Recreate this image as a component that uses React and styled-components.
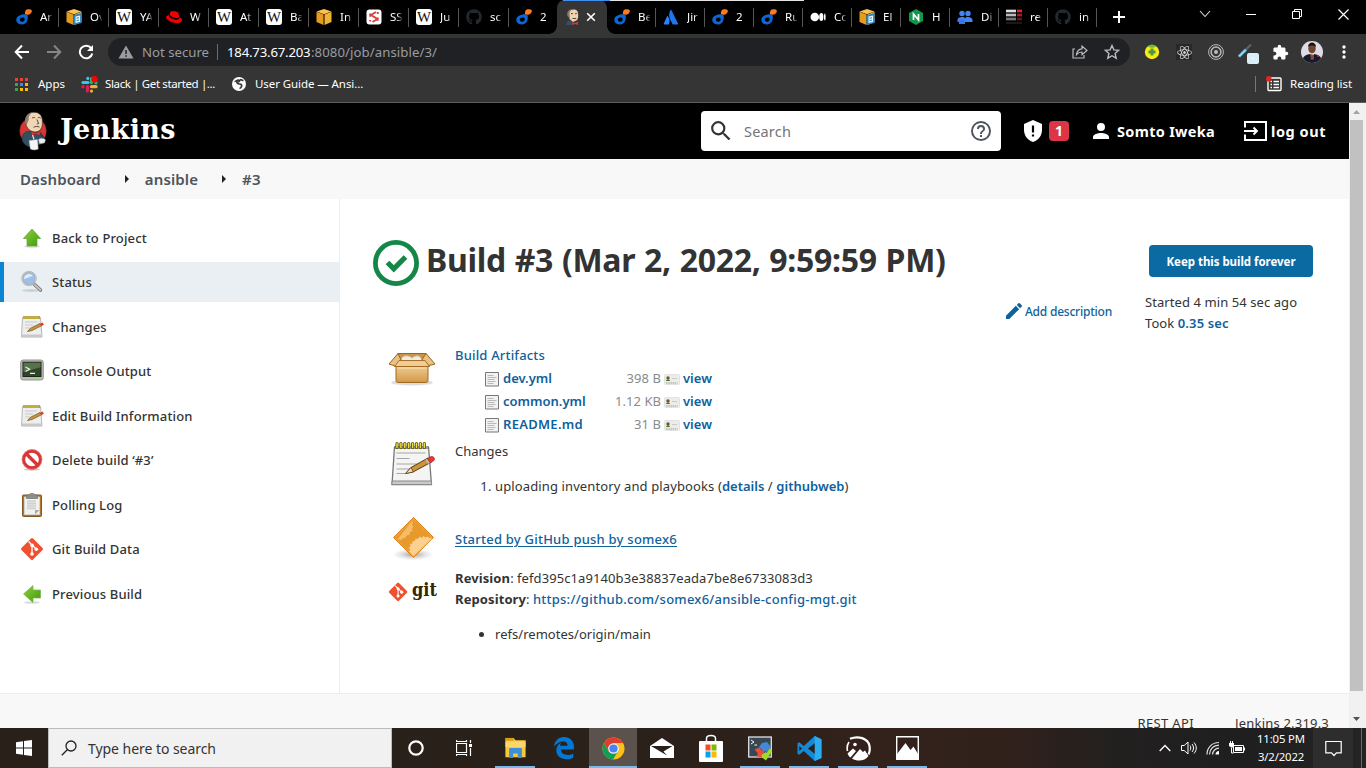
import React from "react";
import styled, { createGlobalStyle, css } from "styled-components";
import { FaGithub, FaRedhat, FaReact } from "react-icons/fa";
import { MdExtension } from "react-icons/md";

const GlobalStyle = createGlobalStyle`
  *, *::before, *::after { box-sizing: border-box; }
  html, body { margin: 0; padding: 0; height: 100%; overflow: hidden; }
  body { font-family: "Noto Sans", "Open Sans", sans-serif; font-size: 13px; color: #333; background: #fff; }
  svg { display: block; flex: none; }
  a { text-decoration: none; }
`;

const Screen = styled.div`
  display: flex;
  flex-direction: column;
  width: 1366px;
  height: 768px;
  overflow: hidden;
`;

/* ---------- browser chrome ---------- */

const TabStrip = styled.div`
  position: relative;
  display: flex;
  height: 34px;
  padding-left: 9px;
  background: #000;
`;

const LoadingBar = styled.div`
  position: absolute;
  z-index: 2;
  top: 0;
  left: 563px;
  width: 241px;
  height: 1px;
  background: linear-gradient(90deg, #3f8ef0 47px, #e4e4e4 47px);
`;

const Tab = styled.div`
  display: flex;
  align-items: center;
  flex: none;
  width: ${(p) => p.$width}px;
  height: 34px;
  padding-left: 7px;
  gap: 8px;
  ${(p) =>
    p.$active
      ? css`
          position: relative;
          padding-left: 8px;
          gap: 5px;
          background: #353535;
          border-radius: 8px 8px 0 0;
          &::before,
          &::after {
            content: "";
            position: absolute;
            bottom: 0;
            width: 8px;
            height: 8px;
          }
          &::before {
            left: -8px;
            background: radial-gradient(circle at 0 0, #000 7.5px, #353535 8px);
          }
          &::after {
            right: -8px;
            background: radial-gradient(circle at 100% 0, #000 7.5px, #353535 8px);
          }
        `
      : css`
          background: ${p.$last ? "none" : "linear-gradient(#555, #555) right 0 top 8px / 1px 19px no-repeat"};
        `}
`;

const TabTitle = styled.span`
  width: 12px;
  overflow: hidden;
  color: #fff;
  font-size: 11.5px;
  line-height: 18px;
  white-space: nowrap;
  -webkit-mask-image: linear-gradient(90deg, #000 7px, transparent 13px);
  mask-image: linear-gradient(90deg, #000 7px, transparent 13px);
`;

const NewTab = styled.div`
  display: flex;
  align-items: center;
  margin-left: 16px;
`;

const WindowButtons = styled.div`
  display: flex;
  align-items: center;
  height: 28px;
  margin-left: auto;
`;

const WindowButton = styled.div`
  display: flex;
  justify-content: center;
  width: 46px;
`;

const Toolbar = styled.div`
  display: flex;
  align-items: center;
  height: 36px;
  padding-left: 12px;
  background: #353535;
`;

const NavButton = styled.div`
  display: flex;
  justify-content: center;
  width: 20px;
  margin-right: 12px;
`;

const Omnibox = styled.div`
  display: flex;
  align-items: center;
  width: 1022px;
  height: 28px;
  padding: 0 10px;
  border-radius: 14px;
  background: #202124;
  color: #9a9ca0;
  font-size: 13.2px;
  white-space: nowrap;
`;

const SecurityText = styled.span`
  width: 75px;
  margin-left: 8px;
  line-height: 18px;
`;

const OmniDivider = styled.i`
  width: 1px;
  height: 16px;
  margin-right: 9px;
  background: #6a6c70;
`;

const UrlHost = styled.span`
  width: 84px;
  color: #fff;
  letter-spacing: -0.2px;
  line-height: 18px;
`;

const UrlPath = styled.span`
  flex: 1;
  letter-spacing: 0.07px;
  line-height: 18px;
`;

const OmniActions = styled.div`
  display: flex;
  align-items: center;
  gap: 16px;
`;

const Extensions = styled.div`
  display: flex;
  align-items: center;
  margin-left: 6px;
`;

const ExtensionSlot = styled.div`
  display: flex;
  justify-content: center;
  width: 32px;
`;

const ReactTile = styled.div`
  display: grid;
  place-items: center;
  width: 16px;
  height: 16px;
  background: #282828;
`;

const BookmarkBar = styled.div`
  display: flex;
  align-items: center;
  height: 32px;
  padding: 0 14px 4px 15px;
  background: #353535;
  color: #fff;
  font-size: 11.5px;
`;

const ChromeEdge = styled.div`
  height: 1px;
  background: #5c5c5c;
`;

const Bookmark = styled.div`
  display: flex;
  align-items: center;
  gap: ${(p) => p.$gap}px;
  margin-right: ${(p) => p.$after || 16}px;
  letter-spacing: ${(p) => p.$tracking || 0}px;
  line-height: 18px;
  white-space: nowrap;
`;

const ReadingList = styled(Bookmark)`
  margin: 0 0 0 auto;
  padding-left: 11px;
  background: linear-gradient(#777, #777) left center / 1px 16px no-repeat;
`;

/* ---------- page ---------- */

const Viewport = styled.div`
  display: flex;
  height: 625px;
`;

const Page = styled.div`
  width: 1349px;
  overflow: hidden;
  background: #fff;
`;

const Header = styled.header`
  display: flex;
  align-items: center;
  height: 56px;
  padding: 0 23px 0 19px;
  background: #000;
  color: #fff;
  font-size: 14.5px;
  font-weight: 700;
  white-space: nowrap;
`;

const BrandName = styled.span`
  margin: -3px 0 0 13px;
  font: 700 27px/36px "DejaVu Serif", serif;
  letter-spacing: 0.35px;
`;

const SearchBox = styled.div`
  display: flex;
  align-items: center;
  width: 300px;
  height: 40px;
  margin-left: auto;
  padding: 0 9px;
  border-radius: 4px;
  background: #fff;
`;

const SearchPlaceholder = styled.span`
  flex: 1;
  margin-left: 12px;
  color: #757575;
  font-weight: 400;
  letter-spacing: 0.18px;
`;

const SecurityAlert = styled.div`
  display: flex;
  align-items: center;
  gap: 5px;
  margin-left: 21px;
`;

const AlertCount = styled.span`
  width: 20px;
  height: 20px;
  border-radius: 4px;
  background: #dc3545;
  font-size: 14px;
  line-height: 20px;
  text-align: center;
`;

const HeaderLink = styled.a`
  display: flex;
  align-items: center;
  gap: ${(p) => p.$gap}px;
  margin-left: ${(p) => p.$before}px;
  letter-spacing: ${(p) => p.$tracking}px;
`;

const Breadcrumbs = styled.nav`
  display: flex;
  align-items: center;
  height: 40px;
  padding-left: 20px;
  background: #f8f8f8;
  color: #4d545d;
  font-size: 15px;
  font-weight: 600;
  letter-spacing: 0.12px;
`;

const CrumbArrow = styled.i`
  width: 0;
  margin: 0 ${(p) => p.$after}px 0 24px;
  border: 4px solid transparent;
  border-left-color: #222;
  border-right-width: 0;
`;

const Body = styled.div`
  display: flex;
  height: 494px;
`;

const SidePanel = styled.aside`
  display: flex;
  flex-direction: column;
  gap: 4.5px;
  width: 340px;
  padding-top: 18.8px;
  border-right: 1px solid #e9eef1;
`;

const Task = styled.a`
  display: flex;
  align-items: center;
  gap: 8px;
  height: 40px;
  padding-left: 20px;
  font-weight: 500;
  letter-spacing: 0.14px;
  ${(p) =>
    p.$active &&
    css`
      background: #e9eff2;
      box-shadow: inset 4px 0 #0b86d4;
    `}
`;

const Main = styled.main`
  display: flex;
  flex: 1;
  padding: 41px 0 0 32px;
`;

const BuildColumn = styled.div`
  width: 740px;
`;

const TitleRow = styled.div`
  display: flex;
  align-items: center;
  height: 46px;
  gap: 6px;
`;

const Title = styled.h1`
  margin: -7px 0 0;
  font-size: 32px;
  font-weight: 700;
  letter-spacing: -0.3px;
  word-spacing: 0.8px;
  line-height: 40px;
  white-space: nowrap;
`;

const DescriptionRow = styled.div`
  display: flex;
  justify-content: flex-end;
  height: 58px;
  padding-top: 15px;
`;

const DescriptionLink = styled.a`
  display: flex;
  align-items: center;
  gap: 3px;
  height: 20px;
  color: #0e639c;
  font-size: 12px;
  font-weight: 500;
  letter-spacing: -0.22px;
`;

const SummaryRow = styled.section`
  display: grid;
  grid-template-columns: 67px 1fr;
  height: ${(p) => p.$height}px;
  padding-left: 16px;
`;

const SummaryText = styled.div`
  padding-top: ${(p) => p.$top || 1}px;
  line-height: 21px;
  white-space: nowrap;
`;

const Link = styled.a`
  color: #0f619b;
  font-weight: ${(p) => p.$weight || 600};
  letter-spacing: ${(p) => p.$tracking || 0}px;
  text-decoration: ${(p) => (p.$underlined ? "underline" : "none")};
  text-underline-offset: 2px;
`;

const FileTable = styled.div`
  display: grid;
  grid-template-columns: 18px 76px 85px 19px auto;
  grid-auto-rows: 23px;
  align-items: center;
  padding: 1px 0 0 30px;
`;

const FileSize = styled.span`
  padding-right: 3px;
  color: #8a8a8a;
  letter-spacing: 0.06px;
  text-align: right;
`;

const ChangeList = styled.ol`
  margin: 14px 0 0;
  padding-left: 40px;
  letter-spacing: 0.12px;
`;

const RefList = styled.ul`
  margin: 14px 0 0;
  padding-left: 40px;
  letter-spacing: 0.03px;
`;

const FieldName = styled.b`
  letter-spacing: 0.1px;
`;

const Hash = styled.span`
  letter-spacing: 0.09px;
`;

const BuildInfo = styled.div`
  padding: 5px 0 0 33px;
  line-height: 21px;
  white-space: nowrap;
  letter-spacing: 0.08px;
`;

const KeepButton = styled.button`
  display: block;
  width: 164px;
  height: 32px;
  margin: 0 0 15px 4px;
  padding: 0;
  border: 0;
  border-radius: 4px;
  background: #0b6aa2;
  color: #fff;
  font: 700 11.5px/34px "Noto Sans", sans-serif;
  letter-spacing: -0.04px;
`;

const Footer = styled.footer`
  display: flex;
  justify-content: flex-end;
  height: 36px;
  padding: 19px 20px 0 0;
  border-top: 1px solid #e9eef1;
  background: #f8f8f8;
  line-height: 20px;
  letter-spacing: 0.2px;
`;

const FooterLink = styled.a`
  margin-left: 41px;
  letter-spacing: ${(p) => p.$tracking}px;
`;

const ScrollTrack = styled.div`
  display: flex;
  flex-direction: column;
  align-items: center;
  width: 17px;
  padding: 7px 2px 0 0;
  background: #f1f1f1;
`;

const ScrollThumb = styled.div`
  width: 13px;
  height: 571px;
  margin: 6px 0 26px;
  background: #c1c1c1;
`;

/* ---------- taskbar ---------- */

const Taskbar = styled.div`
  display: flex;
  height: 40px;
  background: linear-gradient(90deg, #29201a 0, #2b211a 700px, #33221b 900px, #30211c 1020px, #22201f 1110px, #1f1f20 1250px, #242424 1366px);
`;

const StartButton = styled.div`
  display: grid;
  place-items: center;
  width: 48px;
`;

const TaskSearch = styled.div`
  display: flex;
  align-items: center;
  gap: 11px;
  width: 344px;
  padding-left: 12px;
  border: 1px solid #bcbcbc;
  background: #f1f1f1;
  color: #333;
  font-size: 14px;
  letter-spacing: -0.05px;
`;

const AppSlot = styled.div`
  display: flex;
  align-items: center;
  justify-content: center;
  width: 49px;
  padding-left: ${(p) => (p.$running ? 1 : 0)}px;
  background: ${(p) =>
    p.$running ? `linear-gradient(#76b9ed, #76b9ed) center bottom / ${p.$focused ? 48 : 40}px 2px no-repeat` : "none"}
    ${(p) => (p.$focused ? ", linear-gradient(#5b524d, #5b524d) center / 48px 40px no-repeat" : "")};
`;

const Tray = styled.div`
  display: flex;
  align-items: center;
  margin-left: auto;
`;

const TrayIcon = styled.div`
  display: flex;
  justify-content: center;
  width: 24px;
`;

const Clock = styled.div`
  width: 64px;
  color: #fff;
  font-size: 11.3px;
  letter-spacing: -0.12px;
  line-height: 18px;
  text-align: center;
`;

const ActionCenter = styled.div`
  display: grid;
  place-items: center;
  width: 40px;
  height: 40px;
  background: #2d2d2d;
`;

const DesktopEdge = styled.div`
  width: 5px;
  height: 40px;
  margin-left: 8px;
  border-left: 1px solid #6a6a6a;
`;

/* ---------- icons ---------- */

const Svg = ({ size = 16, w, h, box = 16, children }) => (
  <svg width={w || size} height={h || size} viewBox={typeof box === "string" ? box : `0 0 ${box} ${box}`} fill="none">
    {children}
  </svg>
);

const Digital = () => (
  <Svg>
    <path fillRule="evenodd" d="M6.500 5.500c1.800-.4 3.600 0 5 .6.900 3.800-.2 9.400-5.700 9.400C2.500 15.500.300 13.500.300 10.800c0-3 2.900-4.600 6.200-5.300zM6.800 8.500c-1.800 0-3 .9-3 2.200s1 2 2.400 2c1.600 0 2.500-1.200 2.500-2.500 0-1.100-.7-1.700-1.900-1.700z" fill="#0c66d8" />
    <path d="M8.900 5.300C8.600 1.800 10 .300 12 .300h1.500c1.800 0 2.500 1 2.300 2.200-.3 2-2 3.200-4 3.200-1.300 0-2.100-.2-2.900-.4z" fill="#ff7a1f" />
  </Svg>
);
const AwsCube = ({ doc }) => (
  <Svg>
    <path d="M8 0l7.500 2.500L8 5.200.500 2.500z" fill="#f9c253" />
    <path d="M.500 2.800l7 2.700V16l-7-3z" fill="#e59c1c" />
    <path d="M15.500 2.800l-7 2.700V16l7-3z" fill="#f2b233" />
    {doc && (
      <>
        <path d="M7.500 6.200L15.700 4v9.900L7.500 16z" fill="#2a86c4" />
        <path d="M9.500 7.600l4.600-1.200v6.400l-4.600 1.200z" fill="#e9f4fb" />
        <path d="M10.500 9.300l2.500-.6M10.500 11.700l2.500-.6" stroke="#2a86c4" />
      </>
    )}
  </Svg>
);
const Wiki = () => (
  <Svg>
    <rect width="16" height="16" rx="3" fill="#fff" />
    <text x="8" y="13" textAnchor="middle" fontFamily="Liberation Serif, serif" fontSize="14" fill="#111" textLength="14" lengthAdjust="spacingAndGlyphs">W</text>
  </Svg>
);
const RedHat = () => <FaRedhat size={16} color="#e00" />;
const SshIcon = () => (
  <Svg>
    <rect x=".5" y=".5" width="15" height="15" rx="3" fill="#fff" />
    <path d="M10 3L5 6l6.500 4-5 3M4.200 4.500v3.200M11.800 8.500v3.200M4.200 11v1.500M11.800 3v2" stroke="#d9403c" strokeWidth="1.900" />
  </Svg>
);
const GitHub = () => <FaGithub size={16} color="#24292e" />;
const Atlassian = () => (
  <Svg>
    <path d="M4.700 7.300c-.2-.3-.5-.3-.7 0L.700 14.800c-.1.300 0 .600.400.600h4.700c1.500-2.800.8-6-1.100-8.100z" fill="#2684ff" />
    <path d="M7.600 1c-2.300 3.700-1.500 7.400.1 10.600l1.700 3.500c.1.200.3.300.5.300h4.800c.3 0 .5-.3.400-.6L8.400 1.100C8.200.800 7.800.700 7.600 1z" fill="#1f74f0" />
  </Svg>
);
const Medium = () => (
  <Svg>
    <circle cx="4.800" cy="8" r="4.300" fill="#fff" />
    <ellipse cx="11.300" cy="8" rx="2.100" ry="4" fill="#fff" />
    <ellipse cx="14.800" cy="8" rx=".8" ry="3.500" fill="#fff" />
  </Svg>
);
const Nginx = () => (
  <Svg>
    <path d="M8 0l7 4v8l-7 4-7-4V4z" fill="#12984a" />
    <path d="M5.500 11V5l5 6V5" stroke="#fff" strokeWidth="1.700" />
  </Svg>
);
const People = () => (
  <Svg>
    <g fill="#4285f4">
      <circle cx="5" cy="4.500" r="2.700" /><circle cx="11" cy="4.500" r="2.700" />
      <path d="M.5 13V11c0-2 2.200-3 4.500-3s3 .5 3 2c0-1.500 1-2 3-2s4.500 1 4.500 3v2z" />
    </g>
    <path d="M2 15V12.500c0-1.500 1.500-2.200 3-2.200s3 .7 3 2.200V15z" fill="#3577e5" />
  </Svg>
);
const RedmineBars = () => (
  <Svg>
    <path d="M0 2h10" stroke="#ddd" strokeWidth="2.700" /><path d="M0 6h10" stroke="#bbb" strokeWidth="2.700" />
    <path d="M0 10h10" stroke="#777" strokeWidth="2.700" />
    <path d="M11 2h5" stroke="#e8232c" strokeWidth="2.700" /><path d="M11 6h5" stroke="#a52026" strokeWidth="2.700" /><path d="M11 10h5" stroke="#6b1418" strokeWidth="2.700" />
    <path d="M0 14h16" stroke="#191919" strokeWidth="2" />
  </Svg>
);
const ButlerFace = () => (
  <Svg>
    <path d="M3.500 3.500C5 0 11-.500 12.500 2.500c1 3 1 6-.3 8.500l-4.200 2-3.500-3z" fill="#efd2b0" />
    <path d="M2.500 7C1.200 3 4 0 7.500 0 5.200 1 4.500 3 4.600 5.500L5 10z" fill="#8a7a6a" />
    <path d="M6 4.500l2 .300M10 4.800l1.800-.300M7.500 9.500h3.700" stroke="#59463c" />
    <path d="M1 16c.5-3 2-4.500 4-5l4 5z" fill="#335061" />
    <path d="M7 13l3 1 3-1.500V16l-3-1-2.500 1z" fill="#d33833" />
  </Svg>
);

const JenkinsLogo = () => (
  <Svg w={28} h={40} box="0 0 28 40">
    <ellipse cx="14" cy="20" rx="13.300" ry="13.500" fill="#d33833" stroke="#8b1f1c" strokeWidth=".5" />
    <path d="M3 28c0-4 2-7 6-7.500l9 0c4 .500 6 3.500 6.500 8l-1 4-11 3.500C8 36 5 33 4 31z" fill="#335061" stroke="#1c2c36" strokeWidth=".5" />
    <path d="M6.500 11C6 5 9.500 1.300 15 1.200c5 0 8 3 8.300 7.800.3 4.500 0 8.500-3.300 11-3 1.500-7 1.300-9.500-1C8 17 6.800 14 6.500 11z" fill="#f0d6b7" stroke="#2b2522" strokeWidth=".6" />
    <path d="M7.500 15C4.500 9.500 6 3 13.500 1.300 10.300 3.500 9.500 6 9.700 9c-1 1.500-1.200 3-2.200 6z" fill="#8d8073" />
    <path d="M13 7.200c1-1 2.200-1 3.200-.2M18.800 7c1-.8 2-.7 3 .1M18 8.500l1.600 4-1.800.600M14.500 16.300c1.500-1 4.500-1 6-.300" stroke="#40342d" strokeWidth=".9" />
    <path d="M12 20l4.500 2 4.500-2 .8 4.500-5-1.300-4.300 1.500z" fill="#d33833" stroke="#6d1818" strokeWidth=".4" />
    <path d="M13.500 24l1.500 4.500" stroke="#dfe7ec" strokeWidth="1.200" />
    <path d="M10 29.500l8.500-1 .8 9.500c-2.500 1.200-5.500 1.300-8 0z" fill="#f5f5f5" stroke="#999" strokeWidth=".4" />
    <path d="M19.500 28.500c2.500-2 5.500-1.800 7 .5l-1 3-5 .8z" fill="#e8edf0" stroke="#8a949a" strokeWidth=".4" />
    <path d="M21.500 22.500l3 4.500" stroke="#29404d" strokeWidth="2" />
  </Svg>
);

const ArrowUp = ({ left }) => (
  <Svg size={24} box={24}>
    <defs><linearGradient id={left ? "gl" : "gu"} x1="0" y1="0" x2="1" y2="1"><stop offset="0" stopColor="#8fd03f" /><stop offset="1" stopColor="#3f9c08" /></linearGradient></defs>
    <ellipse cx="12" cy="20.500" rx="8" ry="1.300" fill="#ddd" />
    {left ? (
      <path d="M3.500 12L13 3.500V8h7.500v8H13v4.500z" fill="url(#gl)" stroke="#79b24d" strokeWidth=".7" />
    ) : (
      <path d="M12 3l8.700 9.500H17v7.500H7v-7.500H3.300z" fill="url(#gu)" stroke="#65a53b" strokeWidth=".7" />
    )}
  </Svg>
);
const Magnifier = () => (
  <Svg size={24} box={24}>
    <ellipse cx="11" cy="20.500" rx="9" ry="1.500" fill="#ccd2d4" />
    <path d="M14.500 14.500l6 5.500" stroke="#777" strokeWidth="3.600" strokeLinecap="round" />
    <path d="M14.500 14.500l6 5.500" stroke="#c4c4c4" strokeWidth="1.800" strokeLinecap="round" />
    <circle cx="9" cy="8.500" r="6.700" fill="#9cbfec" stroke="#9ea2a5" strokeWidth="1.800" />
    <path d="M4 9a5 5 0 0 1 9-3c-3 .500-5 2-9 3z" fill="#deecfb" />
    <circle cx="9" cy="8.500" r="6.700" stroke="#e7e7e7" strokeWidth=".6" />
  </Svg>
);
const Notepad = ({ size = 24, large }) => (
  <Svg size={size} box={large ? "-2 -1.500 48 48" : 24}>
    {large ? (
      <>
        <path d="M4.500 5.500h34l3 37.500H2z" fill="#f4f4f3" stroke="#777" strokeWidth="1.300" />
        <path d="M2 39.500h39.500v3.500H2z" fill="#c9c9c9" stroke="#8a8a8a" />
        <path d="M5 5h33v2.500H5z" fill="#999" />
        <path d="M7 2v4M10.900 2v4M14.800 2v4M18.700 2v4M22.600 2v4M26.500 2v4M30.400 2v4M34.300 2v4" stroke="#5d5200" strokeWidth="3.200" strokeLinecap="round" />
        <path d="M7 2v4M10.900 2v4M14.800 2v4M18.700 2v4M22.600 2v4M26.500 2v4M30.400 2v4M34.300 2v4" stroke="#efe03f" strokeWidth="1.500" strokeLinecap="round" />
        <path d="M6.500 11.500h29M6.500 17h13M6.500 22.500h26M6.500 27.500h17M6.500 32h9" stroke="#a5a5a5" strokeWidth="1.200" />
        <path d="M15.500 32l5.500-6L38 16.500l3.500 4L23 30.500z" fill="#c8943d" stroke="#5e3c0e" />
        <path d="M15.500 32l5.500-6 2.300 4.500z" fill="#f2dcb0" stroke="#4a3a22" strokeWidth=".7" />
        <path d="M37.500 17l3.500-2c2.500-.500 4.500 2 3 4l-3.500 2.200z" fill="#e33" stroke="#8e2222" strokeWidth=".6" />
        <path d="M36 18l3 4" stroke="#bbb" strokeWidth="1.700" />
      </>
    ) : (
      <>
        <path d="M2.500 2.500h18L22 22H1.500z" fill="#eeeeed" stroke="#b6b6b6" />
        <path d="M1.500 19.500h20V22h-20z" fill="#c9c9c9" />
        <path d="M3 1h17v3H3z" fill="#b5a037" /><path d="M4 1v3M6 1v3M8 1v3M10 1v3M12 1v3M14 1v3M16 1v3M18 1v3" stroke="#d6c65c" strokeWidth=".7" />
        <path d="M5 7h12M5 10h8M5 13h5" stroke="#c9c9c9" />
        <path d="M7.500 16.500l3-3.300L20 8.500l2 2-10 5z" fill="#c8943d" stroke="#71501f" strokeWidth=".7" />
        <path d="M19.500 9l3-1.500 1.500 2-2.500 1.500z" fill="#e33c2f" />
      </>
    )}
  </Svg>
);
const Terminal = () => (
  <Svg size={24} box={24}>
    <rect x=".7" y="1" width="22.600" height="20" rx="2.500" fill="#b9bbb6" stroke="#94968f" />
    <rect x="3" y="3.200" width="18" height="14.300" fill="#2f4428" stroke="#1b2518" />
    <path d="M3.500 3.700h17v4.500L3.500 13z" fill="#58734c" />
    <path d="M5.500 8l4 2.300-4 2.200M10 14.300h5" stroke="#e9f3e4" strokeWidth="1.300" />
    <path d="M16 19.500h2" stroke="#7f4" />
  </Svg>
);
const NoEntry = () => (
  <Svg size={24} box={24}>
    <ellipse cx="12" cy="21.500" rx="8" ry="1.200" fill="#ccc" />
    <circle cx="12" cy="11.500" r="8.500" fill="#fff" stroke="#d93535" strokeWidth="3.300" />
    <path d="M6 5.500l12 12" stroke="#d93535" strokeWidth="3.300" />
    <circle cx="12" cy="11.500" r="10" stroke="#ef8d8d" strokeWidth=".7" />
  </Svg>
);
const Clipboard = () => (
  <Svg size={24} box={24}>
    <rect x="2.500" y="2" width="19" height="21.500" rx="1" fill="#b2762c" stroke="#85561d" />
    <path d="M4.500 4h15v17.500h-15z" fill="#f1f1f0" stroke="#d5d5d5" />
    <path d="M7 7.500h9v9H7z" fill="#dedede" /><path d="M7 8h9M7 10.500h9M7 13h9M7 15.500h9" stroke="#d0d0d0" />
    <path d="M6.500 2H9c.500-2 5.500-2 6 0h2.500v3.500h-11z" fill="#8a8f88" stroke="#646862" strokeWidth=".6" />
    <path d="M19.500 17l-4.500 4.500V17z" fill="#aaa" />
  </Svg>
);
const GitShape = () => (
  <>
    <rect x="3.800" y="3.800" width="16.400" height="16.400" rx="1.500" transform="rotate(45 12 12)" fill="#f05030" />
    <path d="M8.500 4.500l3.500 3.500v9M12 8l4.500 4.300" stroke="#fff" strokeWidth="1.300" />
    <circle cx="12" cy="8.300" r="1.800" fill="#fff" /><circle cx="12" cy="17" r="1.800" fill="#fff" /><circle cx="16.300" cy="12.300" r="1.800" fill="#fff" />
  </>
);
const GitMark = () => <Svg size={24} box={24}><GitShape /></Svg>;
const GitLogo = () => (
  <Svg size={50} box={50}>
    <g transform="translate(0 14.800) scale(.84)"><GitShape /></g>
    <text x="24" y="29" fontFamily="DejaVu Serif, serif" fontWeight="700" fontSize="18" fill="#362701" textLength="25" lengthAdjust="spacingAndGlyphs">git</text>
  </Svg>
);
const Success = () => (
  <Svg w={48} h={48} box={48}>
    <circle cx="24" cy="24" r="20.600" stroke="#138648" strokeWidth="4.800" />
    <path d="M15.500 23.500l6.300 6.300L33.500 18" stroke="#138648" strokeWidth="5.200" />
  </Svg>
);
const Pencil = () => (
  <Svg size={16} box="3 3 18 18">
    <path fill="#0f619b" d="M3 17.250V21h3.750L17.810 9.940l-3.750-3.750L3 17.250zM20.710 7.040a.996.996 0 0 0 0-1.410l-2.340-2.340a.996.996 0 0 0-1.410 0l-1.830 1.830 3.750 3.750 1.830-1.830z" />
  </Svg>
);
const PackageBox = () => (
  <Svg size={48} box={48}>
    <defs><linearGradient id="bx" x1="0" y1="0" x2="0" y2="1"><stop offset="0" stopColor="#efc88b" /><stop offset="1" stopColor="#d19a4b" /></linearGradient></defs>
    <ellipse cx="24" cy="38.500" rx="21" ry="3" fill="#ddd" />
    <path d="M10 9.500h28l4 9H6z" fill="#c99549" stroke="#9b6419" />
    <path d="M13 17c0-6 7-6.500 11-3 4-3.500 9-3 10 3z" fill="#f1ede3" stroke="#c9b797" />
    <path d="M10 9.500L1 20l6 2 6-6zM38 9.500l9 10.500-6 1.500-7-6z" fill="#eac184" stroke="#9b6419" />
    <path d="M11 16.500h26l4.500 6h-35z" fill="#f0cc94" stroke="#a8712a" />
    <path d="M8 22.500h32v14a2 2 0 0 1-2 2H10a2 2 0 0 1-2-2z" fill="url(#bx)" stroke="#a36b22" />
    <path d="M9.500 24h29" stroke="#f7e0b8" />
  </Svg>
);
const GearDiamond = () => (
  <Svg size={48} box="-1 0 48 48">
    <defs><radialGradient id="sh"><stop offset="0" stopColor="#999" /><stop offset="1" stopColor="#ddd" stopOpacity=".2" /></radialGradient></defs>
    <ellipse cx="24" cy="40.500" rx="19" ry="5.500" fill="url(#sh)" />
    <path d="M24.500 3.500L44.500 23.500 24.500 43.500 4.500 23.500z" fill="#e7992b" stroke="#e07e14" />
    <path d="M24.500 5l-2 2 1.500 1-1 3 1.500 1.500-1.500 2 .5 2.500-2.500 1-.5 3-3 .5-1 2.500-2.500 0-1.500 2-2.500-.5-1.500 0L24.500 5z" fill="#f3bc66" />
    <path d="M24.500 42.500L20 37.500l1.500-2-2-1.500 2-1.500-.5-2.500 2.500-.5 0-2.500 2.500 0 .5-2.500 2.500.5 1.500-2.500 2 1.500 2-2 2 1.500 2.500-1 1 1.500 2-.500 1 1.500z" fill="#fbd191" />
    <path d="M24.500 5l18.500 18.500-18.500 18.500L6 23.500z" stroke="#f4b04d" strokeWidth=".7" />
  </Svg>
);
const FileIcon = () => (
  <Svg box="1 -1 16 16">
    <path d="M1.500.500h13v13.500h-13z" fill="#f2f2f2" stroke="#777" />
    <path d="M3.500 3.500h6M3.500 5.500h9M3.500 7.500h7M3.500 9.500h8M3.500 11.500h6" stroke="#aaa" strokeWidth=".8" />
  </Svg>
);
const ViewIcon = () => (
  <Svg>
    <rect x=".5" y="3.500" width="15" height="10" rx="1" fill="#ececeb" stroke="#e2e2e2" />
    <circle cx="4" cy="7" r="1.700" fill="#6f5631" /><path d="M2 10c0-2 4-2 4 0z" fill="#4b7a22" />
    <path d="M8 7.500h5" stroke="#c9c9c9" /><path d="M2 12h11.500" stroke="#999" strokeDasharray="1.500 .7" />
  </Svg>
);

const Store = () => (
  <Svg w={24} h={30} box="0 0 24 30">
    <path d="M7.500 10V5.500c0-4 9-4 9 0V10" stroke="#fff" strokeWidth="1.500" />
    <rect y="8" width="24" height="21" rx="1" fill="#fff" />
    <path d="M6.500 11.500h5v6h-5z" fill="#f25022" /><path d="M12.500 11.500h5v6h-5z" fill="#7fba00" />
    <path d="M6.500 18.500h5v6h-5z" fill="#00a4ef" /><path d="M12.500 18.500h5v6h-5z" fill="#ffb900" />
  </Svg>
);
const Chrome = () => (
  <Svg size={23} box={24}>
    <circle cx="12" cy="12" r="11.500" fill="#fbc116" />
    <path d="M2 6.300A11.500 11.500 0 0 1 22 6.300H12L7 15z" fill="#e33b2e" />
    <path d="M2 6.200a11.500 11.500 0 0 0 9.500 17.300L16.800 14.500 7 15z" fill="#109d58" />
    <circle cx="12" cy="12" r="5.600" fill="#f3f3f3" /><circle cx="12" cy="12" r="4.300" fill="#4485f1" />
  </Svg>
);
const Explorer = () => (
  <Svg w={23} h={22} box="0 0 23 24">
    <path d="M.5 1h9l2 2.500h11V22H.500z" fill="#f8c93b" /><path d="M.5 1h9v3h-9z" fill="#dd9a13" />
    <path d="M.500 5h22v6h-22z" fill="#fcd66a" />
    <path d="M4.500 23v-9.500c0-1 .5-1.500 1.500-1.500h11c1 0 1.500.5 1.500 1.500V23H14v-5H9v5z" fill="#3f8fd6" />
  </Svg>
);
const Edge = () => (
  <Svg size={24} box={24}>
    <path fill="#0078d7" d="M2 10.800C2.500 5 6.500 1 12 1c6 0 10 4 10 10v2.600H8.700c.3 3.800 3.800 5.400 7 5.400 2 0 3.900-.5 5.500-1.500v4.300c-2 1-4 1.500-6.400 1.500-6.300 0-10.500-3.600-10.500-9 0-3.300 1.700-6.200 5-7.800-.7.900-1.100 2.100-1.200 3.300h7.500c0-2.700-1.500-4.300-4.300-4.300-3.500 0-7 2-9.300 5.300z" />
  </Svg>
);
const Mail = () => (
  <Svg size={24} box={24}>
    <path d="M12 2l12 8v12H0V10z" fill="#fff" /><path d="M1 10h21.500L13.500 15.500l3.500 4-8-4.800z" fill="#2a201a" />
  </Svg>
);
const Moba = () => (
  <Svg size={25} box={25}>
    <rect x=".7" y="1" width="22.600" height="20" fill="#3b4750" stroke="#dde1e4" strokeWidth="1.300" />
    <path d="M3 4l3 2-3 2M6.500 9H9" stroke="#fff" />
    <path d="M6.500 13.500l5-2 2 3 4-1-4 8-5-1 1.500-3z" fill="#ec4b40" />
    <path d="M14 7l5-1 4 5-4 5-5-2-3-3z" fill="#4389d8" />
    <path d="M13.500 19l4-3 1 1 3.500-5 2 3-6 9.500-4-3z" fill="#a2db24" />
  </Svg>
);
const VsCode = () => (
  <Svg size={25} box={24}>
    <path d="M17 0l6.500 3v18L17 24 6.500 14.500 2.200 18 .500 17V7l1.700-1 4.300 3.500z" fill="#1789d4" />
    <path d="M17 0l6.500 3v18L17 24z" fill="#2bacf1" /><path d="M17 7v10l-6.500-5zM2.200 9.500v5L4.800 12z" fill="#2b211a" />
  </Svg>
);
const Gallery = () => (
  <Svg size={25} box={25}>
    <path d="M4 2.800C12-.500 22 2 23.500 10c.6 3.500.3 6-1 8.500" stroke="#fff" strokeWidth="2.200" />
    <path d="M3 6C1 9 .8 12 1.500 15" stroke="#fff" strokeWidth="1.600" />
    <path d="M1.500 17.500l5.500-5 3 2.500-5.500 6.500c-1.500-1-2.500-2.500-3-4z" fill="#fff" />
    <path d="M6 22.500l8-9.500 3 3 2-1.500 3.500 5.500c-3.500 5-11 6-16.500 2.500z" fill="#fff" /><circle cx="9" cy="8.500" r="1.800" fill="#fff" />
  </Svg>
);
const Photos = () => (
  <Svg w={23} h={24} box="0 0 23 24">
    <path d="M.7.700h21.600v22.600H.700z" stroke="#fff" strokeWidth="1.400" /><path d="M1 18L9.500 7l5 7 3-3.500L22 18v5H1z" fill="#fff" />
  </Svg>
);

/* ---------- data ---------- */

const tabsBefore = [
  [<Digital />, "Ar"], [<AwsCube doc />, "Ov"], [<Wiki />, "YA"], [<RedHat />, "W"], [<Wiki />, "At"], [<Wiki />, "Ba"],
  [<AwsCube />, "In"], [<SshIcon />, "SS"], [<Wiki />, "Ju"], [<GitHub />, "sc"], [<Digital />, "2"],
];
const tabsAfter = [
  [<Digital />, "Be"], [<Atlassian />, "Jir"], [<Digital />, "2"], [<Digital />, "Ru"], [<Medium />, "Co"], [<AwsCube doc />, "El"],
  [<Nginx />, "H"], [<People />, "Di"], [<RedmineBars />, "re"], [<GitHub />, "in"],
];
const tasks = [
  [<ArrowUp />, "Back to Project"], [<Magnifier />, "Status", true], [<Notepad />, "Changes"], [<Terminal />, "Console Output"],
  [<Notepad />, "Edit Build Information"], [<NoEntry />, "Delete build ‘#3’"], [<Clipboard />, "Polling Log"],
  [<GitMark />, "Git Build Data"], [<ArrowUp left />, "Previous Build"],
];
const files = [["dev.yml", "398 B"], ["common.yml", "1.12 KB"], ["README.md", "31 B", 0.28]];

function BrowserChrome() {
  return (
    <>
      <TabStrip>
        <LoadingBar />
        {tabsBefore.map(([icon, title], i) => (
          <Tab key={i} $width={i === 10 ? 48 : 50} $last={i === 10}>{icon}<TabTitle>{title}</TabTitle></Tab>
        ))}
        <Tab $width={50} $active>
          <ButlerFace />
          <Svg size={10} box={10}><path d="M1.200 1.200l7.600 7.600M8.800 1.200L1.200 8.800" stroke="#fff" strokeWidth="1.600" /></Svg>
        </Tab>
        {tabsAfter.map(([icon, title], i) => (
          <Tab key={i} $width={49}>{icon}<TabTitle>{title}</TabTitle></Tab>
        ))}
        <NewTab><Svg size={12} box={12}><path d="M6 0v12M0 6h12" stroke="#fff" strokeWidth="2" /></Svg></NewTab>
        <WindowButtons>
          <WindowButton><Svg size={12} box={12}><path d="M1 3l5 5.500L11 3" stroke="#ddd" strokeWidth="1.100" /></Svg></WindowButton>
          <WindowButton><Svg size={10} box={10}><path d="M0 5.500h10" stroke="#fff" /></Svg></WindowButton>
          <WindowButton><Svg size={10} box={10}><path d="M.5 2.500h7v7h-7zM2.500 2V.500h7v7H8" stroke="#fff" /></Svg></WindowButton>
          <WindowButton><Svg size={11} box={11}><path d="M.5.500l10 10M10.500.500l-10 10" stroke="#fff" strokeWidth="1.200" /></Svg></WindowButton>
        </WindowButtons>
      </TabStrip>
      <Toolbar>
        <NavButton><Svg><path d="M15 8H2M8 1.500L1.700 8 8 14.500" stroke="#fff" strokeWidth="2" /></Svg></NavButton>
        <NavButton><Svg><path d="M1 8h13M8 1.500L14.300 8 8 14.500" stroke="#868686" strokeWidth="2" /></Svg></NavButton>
        <NavButton><Svg><path d="M13.200 4.200A6.300 6.300 0 1 0 14.300 9.500" stroke="#fff" strokeWidth="2" /><path d="M15 1v6H9z" fill="#fff" /></Svg></NavButton>
        <Omnibox>
          <Svg><path d="M8 1.500L15.500 14.500H.500z" fill="#9a9ca0" /><path d="M8 6v4M8 11.200v1.600" stroke="#202124" strokeWidth="1.500" /></Svg>
          <SecurityText>Not secure</SecurityText>
          <OmniDivider />
          <UrlHost>184.73.67.203</UrlHost>
          <UrlPath>:8080/job/ansible/3/</UrlPath>
          <OmniActions>
            <Svg><path d="M3 5H1v9h11v-3M4.500 10.500C5 6.500 7 5 10 4.800V2l5 4.500-5 4.300V8C7.500 8 6 8.700 4.500 10.500z" stroke="#bbb" strokeWidth="1.200" /></Svg>
            <Svg><path d="M8 1.500l1.900 4.400 4.800.4-3.600 3.200 1.100 4.700L8 11.700l-4.200 2.500 1.100-4.700L1.300 6.300l4.800-.4z" stroke="#bbb" strokeWidth="1.400" /></Svg>
          </OmniActions>
        </Omnibox>
        <Extensions>
          <ExtensionSlot><Svg><circle cx="8" cy="8" r="7.200" fill="#f7ec19" /><path d="M3 2.500a7 7 0 0 1 10 0L8 4z" fill="#4f9e46" opacity=".7" /><path d="M8 4.500v7M4.500 8h7" stroke="#4a9a3c" strokeWidth="2.800" /></Svg></ExtensionSlot>
          <ExtensionSlot><ReactTile><FaReact size={15} color="#e4e4e4" /></ReactTile></ExtensionSlot>
          <ExtensionSlot><Svg><circle cx="8" cy="8" r="7.400" stroke="#bbb" /><circle cx="8" cy="8" r="4.900" stroke="#bbb" strokeWidth="1.500" /><circle cx="8" cy="8" r="2" fill="#bbb" /></Svg></ExtensionSlot>
          <ExtensionSlot><Svg w={22} h={24} box="-1 0 22 24"><path d="M1 16.500L8 9.500" stroke="#60b8dc" strokeWidth="3" /><path d="M1 16.500L8 9.500" stroke="#d9eef6" strokeWidth="1" /><path d="M8 9.500l5-5" stroke="#5a6368" strokeWidth="2.400" /><rect x="9" y="13" width="12" height="11" rx="2" fill="#d9eef6" /><path d="M14 18.500h2" stroke="#fff" /></Svg></ExtensionSlot>
          <ExtensionSlot><MdExtension size={17} color="#fff" /></ExtensionSlot>
          <ExtensionSlot>
            <Svg size={22} box={22}>
              <clipPath id="av"><circle cx="11" cy="11" r="11" /></clipPath>
              <g clipPath="url(#av)"><path d="M0 0h22v22H0z" fill="#dedce6" /><path d="M1 22c0-7 4-9 10-9s10 2 10 9z" fill="#171a28" /><path d="M9 12h4l-1 7z" fill="#eee" /><ellipse cx="11" cy="7.500" rx="3.700" ry="5" fill="#70452f" /><path d="M7 6c0-6 8-6 8 0-2-2-6-2-8 0z" fill="#19130f" /><circle cx="17" cy="15" r="1" fill="#d5252d" /><path d="M9 13l4 1v4l-3 1z" fill="#7d4c36" /></g>
            </Svg>
          </ExtensionSlot>
          <ExtensionSlot><Svg><g fill="#fff"><circle cx="8" cy="3" r="1.700" /><circle cx="8" cy="8" r="1.700" /><circle cx="8" cy="13" r="1.700" /></g></Svg></ExtensionSlot>
        </Extensions>
      </Toolbar>
      <BookmarkBar>
        <Bookmark $gap={10}>
          <Svg size={13} box={13}>
            <path d="M0 1.500h3M5 1.500h3M10 1.500h3" stroke="#ea4335" strokeWidth="3" /><path d="M0 6.500h3" stroke="#34a853" strokeWidth="3" /><path d="M5 6.500h3" stroke="#4285f4" strokeWidth="3" />
            <path d="M10 6.500h3M5 11.500h3M10 11.500h3" stroke="#fbbc05" strokeWidth="3" /><path d="M0 11.500h3" stroke="#34a853" strokeWidth="3" />
          </Svg>
          Apps
        </Bookmark>
        <Bookmark $gap={7} $tracking={-0.37} $after={17}>
          <Svg size={17} box={17}>
            <g strokeWidth="3.200" strokeLinecap="round">
              <path d="M7 6.500H2M6.800 2.300v.1" stroke="#36c5f0" /><path d="M10.500 2.500v4M15 6.700v.1" stroke="#2eb67d" />
              <path d="M10.500 10.700h4.500M10.500 15v.1" stroke="#ecb22e" /><path d="M6.500 10.700v4.300M2 10.700v.1" stroke="#e01e5a" />
            </g>
            <circle cx="13.500" cy="3.300" r="3.200" fill="#f00" />
          </Svg>
          Slack | Get started |...
        </Bookmark>
        <Bookmark $gap={9} $tracking={-0.08}>
          <Svg size={14} box={14}><circle cx="7" cy="7" r="7" fill="#fff" /><path d="M2.500 4.500c1.500 0 2-1.500 4-1.500 2.500.5.5 2-1 2s0 2 2 2 2.500 1 2 2.500-2 2-2 2M8 2.500c1.500 0 2 1 3.500 1" stroke="#353535" strokeWidth="1.700" /></Svg>
          User Guide — Ansi...
        </Bookmark>
        <ReadingList $gap={8} $tracking={-0.08}>
          <Svg><rect x="2" y="2" width="13" height="12.500" rx="1" stroke="#fff" strokeWidth="1.400" /><path d="M4.500 5.500H6M4.500 8.500H6M4.500 11.500H6M7.500 5.500h5.500M7.500 8.500h5.500M7.500 11.500h5.500" stroke="#fff" strokeWidth="1.300" /><circle cx="2.800" cy="2.800" r="2.800" fill="#e2281d" /></Svg>
          Reading list
        </ReadingList>
      </BookmarkBar>
      <ChromeEdge />
    </>
  );
}

function JenkinsHeader() {
  return (
    <Header>
      <JenkinsLogo />
      <BrandName>Jenkins</BrandName>
      <SearchBox>
        <Svg size={22} box="2 2 20 20"><path fill="#333" d="M15.500 14h-.79l-.28-.27A6.471 6.471 0 0 0 16 9.500 6.500 6.500 0 1 0 9.500 16c1.610 0 3.090-.59 4.230-1.570l.27.28v.79l5 4.990L20.490 19l-4.990-5zm-6 0C7.010 14 5 11.990 5 9.500S7.010 5 9.500 5 14 7.010 14 9.500 11.990 14 9.500 14z" /></Svg>
        <SearchPlaceholder>Search</SearchPlaceholder>
        <Svg size={22} box="1 1 22 22"><path fill="#4d545d" d="M11 18h2v-2h-2v2zm1-16a10 10 0 1 0 0 20 10 10 0 0 0 0-20zm0 18c-4.410 0-8-3.590-8-8s3.590-8 8-8 8 3.590 8 8-3.590 8-8 8zm0-14a4 4 0 0 0-4 4h2c0-1.100.9-2 2-2s2 .9 2 2c0 2-3 1.750-3 5h2c0-2.250 3-2.500 3-5a4 4 0 0 0-4-4z" /></Svg>
      </SearchBox>
      <SecurityAlert>
        <Svg w={22} h={24} box="1 0 22 24"><path fill="#fff" d="M12 1L3 5v6c0 5.550 3.840 10.740 9 12 5.160-1.260 9-6.450 9-12V5l-9-4z" /><path d="M12 6.500v7M12 15.500v2" stroke="#000" strokeWidth="2.200" /></Svg>
        <AlertCount>1</AlertCount>
      </SecurityAlert>
      <HeaderLink $gap={5} $before={21} $tracking={0.3}>
        <Svg size={22} box="1 1 22 22"><path fill="#fff" d="M12 12a4 4 0 1 0 0-8 4 4 0 0 0 0 8zm0 2c-2.670 0-8 1.340-8 4v2h16v-2c0-2.660-5.330-4-8-4z" /></Svg>
        Somto Iweka
      </HeaderLink>
      <HeaderLink $gap={4} $before={29} $tracking={0.55}>
        <Svg w={23} h={20} box="0 0 23 20"><path d="M1 6.500V1h21v18H1v-5.500" stroke="#fff" strokeWidth="2" /><path d="M0 10h13M9.500 6.500L13 10l-3.500 3.500" stroke="#fff" strokeWidth="1.900" /></Svg>
        log out
      </HeaderLink>
    </Header>
  );
}

function BuildPage() {
  return (
    <Body>
      <SidePanel>
        {tasks.map(([icon, label, active]) => <Task key={label} $active={active}>{icon}{label}</Task>)}
      </SidePanel>
      <Main>
        <BuildColumn>
          <TitleRow><Success /><Title>Build #3 (Mar 2, 2022, 9:59:59 PM)</Title></TitleRow>
          <DescriptionRow><DescriptionLink><Pencil />Add description</DescriptionLink></DescriptionRow>
          <SummaryRow $height={96}>
            <PackageBox />
            <SummaryText>
              <Link $weight={500} $tracking={0.17}>Build Artifacts</Link>
              <FileTable>
                {files.map(([name, size, tracking]) => (
                  <React.Fragment key={name}>
                    <FileIcon /><Link $tracking={tracking}>{name}</Link><FileSize>{size}</FileSize><ViewIcon /><Link>view</Link>
                  </React.Fragment>
                ))}
              </FileTable>
            </SummaryText>
          </SummaryRow>
          <SummaryRow $height={74}>
            <Notepad size={48} large />
            <SummaryText>
              Changes
              <ChangeList><li>uploading inventory and playbooks (<Link>details</Link> / <Link>githubweb</Link>)</li></ChangeList>
            </SummaryText>
          </SummaryRow>
          <SummaryRow $height={53}>
            <GearDiamond />
            <SummaryText $top={15}><Link $weight={500} $tracking={0.23} $underlined>Started by GitHub push by somex6</Link></SummaryText>
          </SummaryRow>
          <SummaryRow $height={90}>
            <GitLogo />
            <SummaryText>
              <FieldName>Revision</FieldName>: <Hash>fefd395c1a9140b3e38837eada7be8e6733083d3</Hash><br />
              <FieldName>Repository</FieldName>: <Link $weight={500} $tracking={0.24}>https://github.com/somex6/ansible-config-mgt.git</Link>
              <RefList><li>refs/remotes/origin/main</li></RefList>
            </SummaryText>
          </SummaryRow>
        </BuildColumn>
        <BuildInfo>
          <KeepButton>Keep this build forever</KeepButton>
          Started 4 min 54 sec ago<br />
          Took <Link $tracking={0.15}>0.35 sec</Link>
        </BuildInfo>
      </Main>
    </Body>
  );
}

function WindowsTaskbar() {
  return (
    <Taskbar>
      <StartButton><Svg><path d="M0 2.200L7 1.200v6.300H0zM8 1.100L16 0v7.500H8zM0 8.500h7v6.300l-7-1zM8 8.500h8V16l-8-1.100z" fill="#fff" /></Svg></StartButton>
      <TaskSearch>
        <Svg size={16}><circle cx="10" cy="6" r="5" stroke="#222" strokeWidth="1.300" /><path d="M6.500 9.500L.800 15.300" stroke="#222" strokeWidth="1.300" /></Svg>
        Type here to search
      </TaskSearch>
      <AppSlot><Svg w={18} h={16} box="0 0 18 16"><circle cx="8" cy="8" r="6.700" stroke="#fff" strokeWidth="2.200" /></Svg></AppSlot>
      <AppSlot><Svg w={19} h={16} box="0 0 19 16"><path d="M.5 3.500h10v9H.5zM.5 0v1.500h10V0M.5 16v-1.500h10V16M14.500 0v3M14.500 8v8" stroke="#fff" strokeWidth="1.200" /><path d="M13 4h3v3h-3z" fill="#fff" /></Svg></AppSlot>
      <AppSlot $running><Explorer /></AppSlot>
      <AppSlot><Edge /></AppSlot>
      <AppSlot $running $focused><Chrome /></AppSlot>
      <AppSlot><Mail /></AppSlot>
      <AppSlot><Store /></AppSlot>
      <AppSlot $running><Moba /></AppSlot>
      <AppSlot $running><VsCode /></AppSlot>
      <AppSlot $running><Gallery /></AppSlot>
      <AppSlot $running><Photos /></AppSlot>
      <Tray>
        <TrayIcon><Svg size={12} box={12}><path d="M.7 9L6 3.500 11.300 9" stroke="#fff" strokeWidth="1.300" /></Svg></TrayIcon>
        <TrayIcon><Svg><path d="M.5 5.500h2.700L7 2v12L3.200 10.500H.5z" stroke="#fff" /><path d="M9 5.500c1 1.500 1 3.500 0 5M11 4c2 2.500 2 5.500 0 8M13 2.500c3 3.500 3 7.500 0 11" stroke="#fff" /></Svg></TrayIcon>
        <TrayIcon><Svg size={14} box={14}><path d="M1 13.500C1 6.500 6 1.500 13 1.500M3.500 13.500C4 8 7.500 4.500 13 4.200M6.500 13.500C7 10 9 7.500 13 7.200" stroke="#ddd" strokeWidth="1.200" /><path d="M9.500 13.500c0-2 1.500-3.500 3.500-3.500v3.500z" fill="#fff" /></Svg></TrayIcon>
        <TrayIcon><Svg><path d="M4.500 5.500h10v7h-10z" stroke="#fff" /><path d="M6 7h7v4H6zM15 7.500h1v3h-1zM0 3h5v3L3 8 0 6z" fill="#fff" /><path d="M1.500 1v3M3.500 1v3M2.500 8v5h2" stroke="#fff" /></Svg></TrayIcon>
        <Clock>11:05 PM<br />3/2/2022</Clock>
        <ActionCenter><Svg size={17} box={17}><path d="M.8 1.500h15.400v11.300h-4.700L9 15.500l-2.500-2.700H.8z" stroke="#fff" strokeWidth="1.200" /></Svg></ActionCenter>
        <DesktopEdge />
      </Tray>
    </Taskbar>
  );
}

export default function App() {
  return (
    <Screen>
      <GlobalStyle />
      <BrowserChrome />
      <Viewport>
        <Page>
          <JenkinsHeader />
          <Breadcrumbs>
            Dashboard<CrumbArrow $after={16} />ansible<CrumbArrow $after={16} />#3
          </Breadcrumbs>
          <BuildPage />
          <Footer><FooterLink $tracking={0.35}>REST API</FooterLink><FooterLink $tracking={0.2}>Jenkins 2.319.3</FooterLink></Footer>
        </Page>
        <ScrollTrack>
          <Svg w={7} h={4} box="0 0 7 4"><path d="M0 4l3.500-4L7 4z" fill="#a3a3a3" /></Svg>
          <ScrollThumb />
          <Svg w={7} h={4} box="0 0 7 4"><path d="M0 0l3.500 4L7 0z" fill="#505050" /></Svg>
        </ScrollTrack>
      </Viewport>
      <WindowsTaskbar />
    </Screen>
  );
}
